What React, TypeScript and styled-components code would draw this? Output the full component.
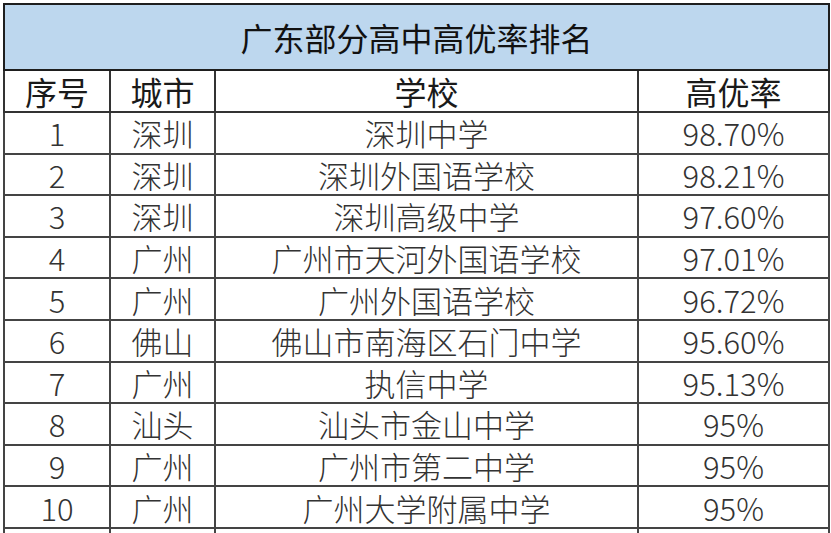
import React from "react";
import styled, { createGlobalStyle } from "styled-components";

const Global = createGlobalStyle`
  html, body { margin: 0; padding: 0; background: #fff; overflow: hidden; }
  body { font-family: "Noto Sans CJK SC", "Noto Sans", sans-serif; }
`;

const Page = styled.div`
  padding: 3px 0 0 3px;
  width: 831px;
  height: 533px;
  box-sizing: border-box;
  overflow: hidden;
`;

const Table = styled.table`
  border-collapse: collapse;
  table-layout: fixed;
  width: 825px;
`;

const TitleCell = styled.th`
  height: 64px;
  background: #bdd7ee;
  border: 2px solid #1e1e1e;
  font-size: 32px;
  font-weight: 400;
  color: #111;
  text-align: center;
  padding: 0;
  line-height: 1;
`;

const HeadCell = styled.th`
  height: 40px;
  border: 2px solid #333;
  font-size: 32px;
  font-weight: 400;
  color: #1a1a1a;
  text-align: center;
  padding: 0;
  line-height: 1;
`;

const Cell = styled.td`
  height: 39.6px;
  border: 2px solid #444;
  font-size: 31px;
  font-weight: 300;
  color: #333;
  text-align: center;
  padding: 0;
  line-height: 1;
  white-space: nowrap;
`;

const rows: [string, string, string, string][] = [
  ["1", "深圳", "深圳中学", "98.70%"],
  ["2", "深圳", "深圳外国语学校", "98.21%"],
  ["3", "深圳", "深圳高级中学", "97.60%"],
  ["4", "广州", "广州市天河外国语学校", "97.01%"],
  ["5", "广州", "广州外国语学校", "96.72%"],
  ["6", "佛山", "佛山市南海区石门中学", "95.60%"],
  ["7", "广州", "执信中学", "95.13%"],
  ["8", "汕头", "汕头市金山中学", "95%"],
  ["9", "广州", "广州市第二中学", "95%"],
  ["10", "广州", "广州大学附属中学", "95%"],
];

export default function App() {
  return (
    <>
      <Global />
      <Page>
        <Table>
          <colgroup>
            <col style={{ width: 106 }} />
            <col style={{ width: 105 }} />
            <col style={{ width: 423 }} />
            <col style={{ width: 191 }} />
          </colgroup>
          <thead>
            <tr>
              <TitleCell colSpan={4}>广东部分高中高优率排名</TitleCell>
            </tr>
            <tr>
              <HeadCell>序号</HeadCell>
              <HeadCell>城市</HeadCell>
              <HeadCell>学校</HeadCell>
              <HeadCell>高优率</HeadCell>
            </tr>
          </thead>
          <tbody>
            {rows.map((r) => (
              <tr key={r[0]}>
                {r.map((c, i) => (
                  <Cell key={i}>{c}</Cell>
                ))}
              </tr>
            ))}
            <tr>
              <Cell />
              <Cell />
              <Cell />
              <Cell />
            </tr>
          </tbody>
        </Table>
      </Page>
    </>
  );
}
